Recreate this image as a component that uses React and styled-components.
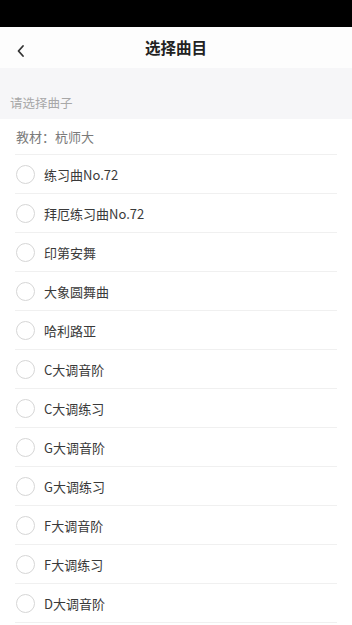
import React, { useState } from "react";
import styled, { createGlobalStyle } from "styled-components";

const GlobalStyle = createGlobalStyle`
  html, body {
    margin: 0;
    padding: 0;
    background: #ffffff;
    font-family: "Noto Sans CJK SC", "Noto Sans", sans-serif;
  }
`;

const songs = [
  "练习曲No.72",
  "拜厄练习曲No.72",
  "印第安舞",
  "大象圆舞曲",
  "哈利路亚",
  "C大调音阶",
  "C大调练习",
  "G大调音阶",
  "G大调练习",
  "F大调音阶",
  "F大调练习",
  "D大调音阶",
];

const App = () => {
  const [selected, setSelected] = useState(null);

  return (
    <>
      <GlobalStyle />
      <Page>
        <StatusBar />
        <NavBar>
          <BackButton>
            <svg width="10" height="14" viewBox="0 0 10 14">
              <path d="M7 2 L2.5 7 L7 12" fill="none" stroke="#333" strokeWidth="1.8" strokeLinecap="round" strokeLinejoin="round" />
            </svg>
          </BackButton>
          <Title>选择曲目</Title>
        </NavBar>
        <Hint>请选择曲子</Hint>
        <List>
          <BookRow>教材：杭师大</BookRow>
          {songs.map((name, index) => (
            <Item key={name} onClick={() => setSelected(index)}>
              <Radio checked={selected === index} />
              <ItemName>{name}</ItemName>
            </Item>
          ))}
        </List>
      </Page>
    </>
  );
};

const Page = styled.div`
  width: 352px;
  min-height: 625px;
  background: #fff;
  overflow: hidden;
`;

const StatusBar = styled.div`
  height: 27px;
  background: #000;
`;

const NavBar = styled.div`
  position: relative;
  height: 41px;
  background: #fdfdfd;
  display: flex;
  align-items: center;
  justify-content: center;
`;

const BackButton = styled.div`
  position: absolute;
  left: 16px;
  top: 17px;
  display: flex;
`;

const Title = styled.div`
  font-size: 15.5px;
  font-weight: bold;
  color: #222;
  margin-top: -2px;
`;

const Hint = styled.div`
  height: 51px;
  box-sizing: border-box;
  background: #f6f6f8;
  color: #a8a8a8;
  font-size: 12.5px;
  padding: 25px 0 0 10px;
`;

const List = styled.div`
  background: #fff;
  padding: 0 15px 0 15px;
`;

const BookRow = styled.div`
  height: 36px;
  box-sizing: border-box;
  display: flex;
  align-items: center;
  padding-left: 1px;
  font-size: 13px;
  color: #7a7a7a;
  border-bottom: 1px solid #f0f0f0;
`;

const Item = styled.div`
  height: 39px;
  box-sizing: border-box;
  display: flex;
  align-items: center;
  border-bottom: 1px solid #f0f0f0;
  cursor: pointer;
`;

const Radio = styled.span`
  width: 19px;
  height: 19px;
  box-sizing: border-box;
  border-radius: 50%;
  border: 1px solid ${(p) => (p.checked ? "#3a8cff" : "#d6d6d6")};
  background: ${(p) => (p.checked ? "#3a8cff" : "#fff")};
  margin-left: 1px;
  margin-right: 9px;
  flex-shrink: 0;
`;

const ItemName = styled.span`
  font-size: 13px;
  color: #3a3a3a;
`;

export default App;
